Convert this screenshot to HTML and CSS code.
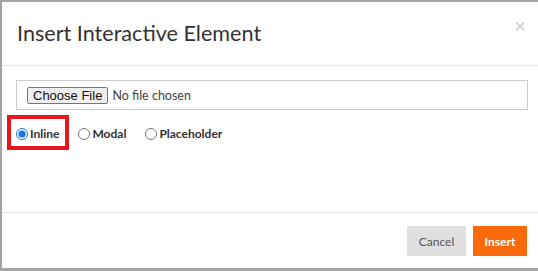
FILE: index.html
```html
<!DOCTYPE html>
<html lang="en">

<head>
    <meta charset="UTF-8">
    <meta name="viewport" content="width=device-width, initial-scale=1">
    <title>Insert Interactive Element</title>
    <link rel="stylesheet" href="styles.css">
</head>

<body>
    <div class="modal">
        <div class="modal-header">
            <h4 class="modal-title">Insert Interactive Element</h4>
            <button type="button" class="close">&times;</button>
        </div>

        <div class="modal-body">
            <div class="file-box">
                <input type="file" id="elementFile">
            </div>

            <div class="radio-row">
                <label class="radio-inline highlighted">
                    <input type="radio" name="mode" value="inline" checked> Inline
                    <span class="highlight-box"></span>
                </label>
                <label class="radio-inline">
                    <input type="radio" name="mode" value="modal"> Modal
                </label>
                <label class="radio-inline">
                    <input type="radio" name="mode" value="placeholder"> Placeholder
                </label>
            </div>
        </div>

        <div class="modal-footer">
            <button type="button" class="btn btn-cancel">Cancel</button>
            <button type="button" class="btn btn-insert">Insert</button>
        </div>
    </div>
</body>

</html>
```

FILE: styles.css
```css
* {
    margin: 0;
    padding: 0;
    box-sizing: border-box;
}

html {
    overflow: hidden;
    background: #a4a4a4;
}

body {
    font-family: 'Lato', 'Liberation Sans', sans-serif;
    height: 271px;
    padding: 2px 0 0 2px;
}

/* the dialog runs past the right edge of the window */
.modal {
    background: #fff;
    width: 540px;
    height: 266px;
    display: flex;
    flex-direction: column;
    box-shadow: 20px 0 0 #fff;
}

/* Header */
.modal-header {
    position: relative;
    padding: 15px;
    border-bottom: 1px solid #e5e5e5;
}

.modal-title {
    font-size: 21.6px;
    font-weight: 400;
    line-height: 33px;
    color: #333;
}

.close {
    position: absolute;
    top: 14px;
    right: 16px;
    border: none;
    background: none;
    font-family: 'Liberation Sans', sans-serif;
    font-size: 20px;
    line-height: 20px;
    color: #cdcdcd;
    cursor: pointer;
}

/* Body */
.modal-body {
    flex: 1;
    padding: 14px 13px 0 14px;
}

.file-box {
    width: 512px;
    height: 30px;
    border: 1px solid #ccc;
    padding: 0 10px;
    display: flex;
    align-items: center;
}

.file-box input {
    font-family: 'Lato', sans-serif;
    font-size: 12.5px;
    color: #444;
}

.file-box input::file-selector-button {
    font-family: 'Liberation Sans', Arial, sans-serif;
    font-size: 13px;
    color: #111;
    background: #efefef;
    border: 1px solid #767676;
    border-radius: 2px;
    padding: 0 5px;
    height: 17px;
    margin-right: 4px;
}

.radio-row {
    display: flex;
    align-items: center;
    gap: 19px;
    margin-top: 16px;
}

.radio-inline {
    position: relative;
    display: flex;
    align-items: center;
    gap: 2px;
    font-size: 12px;
    font-weight: 700;
    color: #333;
}

.radio-inline input {
    width: 12px;
    height: 12px;
    margin: 0;
    accent-color: #1a73e8;
}

/* Red annotation box around the selected option */
.highlight-box {
    position: absolute;
    left: -9px;
    top: -11px;
    width: 62px;
    height: 35px;
    border: 4px solid #e8151b;
}

/* Footer */
.modal-footer {
    border-top: 1px solid #e5e5e5;
    padding: 13px 15px 12px 0;
    display: flex;
    justify-content: flex-end;
    gap: 7px;
}

.btn {
    height: 30px;
    border: none;
    font-family: 'Lato', sans-serif;
    font-size: 12px;
    cursor: pointer;
}

.btn-cancel {
    width: 59px;
    background: #e0e0e0;
    color: #555;
}

.btn-insert {
    width: 54px;
    background: #fa6a0a;
    color: #fff;
    font-weight: 700;
}
```
